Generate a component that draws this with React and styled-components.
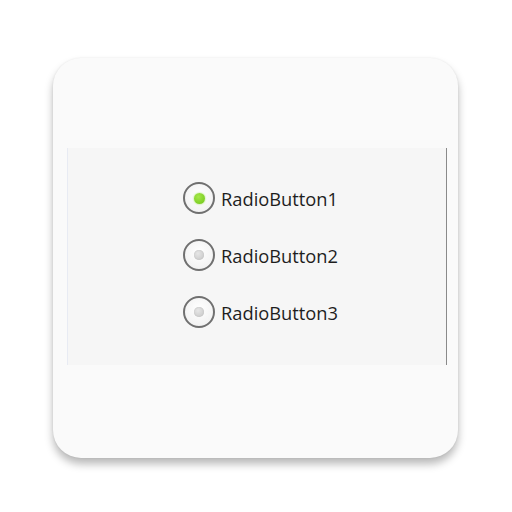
import React from 'react';
import styled, { createGlobalStyle } from 'styled-components';

const Global = createGlobalStyle`
  html, body {
    margin: 0;
    padding: 0;
    background: #ffffff;
  }
`;

const Page = styled.div`
  width: 512px;
  height: 512px;
  padding: 58px 0 0 53px;
  box-sizing: border-box;
`;

const Card = styled.div`
  width: 405px;
  height: 400px;
  border-radius: 28px;
  background: #fafafa;
  box-shadow: 0 6px 8px rgba(0, 0, 0, 0.28), 0 0 2px rgba(0, 0, 0, 0.08);
  padding: 90px 0 0 14px;
  box-sizing: border-box;
`;

const Panel = styled.div`
  width: 380px;
  height: 217px;
  box-sizing: border-box;
  background: #f6f6f6;
  border-left: 1px solid #e8ebf3;
  border-right: 1px solid #8a8a8a;
  display: flex;
  flex-direction: column;
  gap: 25px;
  padding: 34px 0 0 115px;
`;

const Row = styled.label`
  display: flex;
  align-items: center;
  gap: 6px;
  height: 32px;
  font-family: 'Open Sans', 'DejaVu Sans', sans-serif;
  font-size: 18.3px;
  color: #1e1e1e;
`;

const Circle = styled.span`
  width: 32px;
  height: 32px;
  border-radius: 50%;
  box-sizing: border-box;
  border: 2px solid #707070;
  background: radial-gradient(circle at 50% 40%, #ffffff, #eeeeee);
  display: flex;
  align-items: center;
  justify-content: center;
`;

const Dot = styled.span`
  width: ${(p) => (p.$on ? 11 : 10)}px;
  height: ${(p) => (p.$on ? 11 : 10)}px;
  border-radius: 50%;
  background: ${(p) =>
    p.$on
      ? 'radial-gradient(circle at 40% 35%, #a6e84a, #6cc414)'
      : 'radial-gradient(circle at 40% 35%, #e6e6e6, #c4c4c4)'};
  box-shadow: ${(p) => (p.$on ? '0 0 2px #9be04a' : 'inset 0 0 1px #b0b0b0')};
`;

const options = ['RadioButton1', 'RadioButton2', 'RadioButton3'];

export default function App() {
  return (
    <>
      <Global />
      <Page>
        <Card>
          <Panel>
            {options.map((o, i) => (
              <Row key={o}>
                <Circle>
                  <Dot $on={i === 0} />
                </Circle>
                {o}
              </Row>
            ))}
          </Panel>
        </Card>
      </Page>
    </>
  );
}
